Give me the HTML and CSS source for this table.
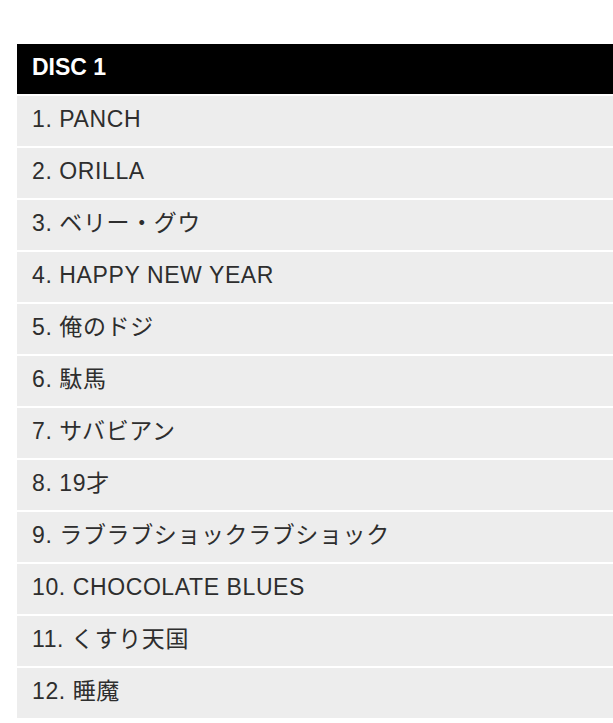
FILE: index.html
```html
<!DOCTYPE html>
<html lang="ja">
<head>
<meta charset="utf-8">
<title>DISC 1</title>
<link rel="stylesheet" href="styles.css">
</head>
<body>
<div class="disc">
  <div class="disc-head">DISC 1</div>
  <ul class="tracks">
    <li class="track">1. PANCH</li>
    <li class="track">2. ORILLA</li>
    <li class="track">3. ベリー・グウ</li>
    <li class="track">4. HAPPY NEW YEAR</li>
    <li class="track">5. 俺のドジ</li>
    <li class="track">6. 駄馬</li>
    <li class="track">7. サバビアン</li>
    <li class="track">8. 19才</li>
    <li class="track">9. ラブラブショックラブショック</li>
    <li class="track">10. CHOCOLATE BLUES</li>
    <li class="track">11. くすり天国</li>
    <li class="track">12. 睡魔</li>
  </ul>
</div>
</body>
</html>
```

FILE: styles.css
```css
html, body {
  margin: 0;
  padding: 0;
  background: #fff;
}
body {
  font-family: "Liberation Sans", Arial, "Noto Sans CJK JP", sans-serif;
  overflow: hidden;
}
.disc {
  margin: 44px 0 0 17px;
  display: flex;
  flex-direction: column;
  gap: 2px;
}
.disc-head {
  height: 50px;
  background: #000;
  color: #fff;
  font-weight: bold;
  font-size: 23px;
  line-height: 46px;
  padding-left: 15px;
  box-sizing: border-box;
}
.tracks {
  list-style: none;
  margin: 0;
  padding: 0;
  display: flex;
  flex-direction: column;
  gap: 2px;
}
.track {
  height: 50px;
  line-height: 46px;
  background: #ededed;
  color: #2e2e2e;
  font-size: 23px;
  letter-spacing: 0.6px;
  padding-left: 15px;
  white-space: nowrap;
  box-sizing: border-box;
}
```
